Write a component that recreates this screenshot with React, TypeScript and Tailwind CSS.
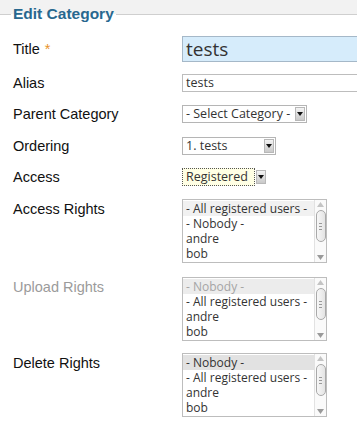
import React from "react";

const uiFont = { fontFamily: '"Open Sans", "DejaVu Sans", sans-serif' };

function Arrow() {
  return (
    <span className="flex h-[14px] w-[10px] items-center justify-center border border-[#b8b8b8] bg-gradient-to-b from-[#f4f4f4] to-[#c9c9c9]">
      <svg width="6" height="4" viewBox="0 0 6 4">
        <path d="M0 0h6L3 4z" fill="#111" />
      </svg>
    </span>
  );
}

function Select({ label, width, focus }: { label: string; width: string; focus?: boolean }) {
  return (
    <div className={`flex h-[18px] items-center ${width} ${focus ? "" : "border border-[#b5b5b5] bg-white"}`}>
      <span
        className={`flex h-full flex-1 items-center pl-[3px] text-[12.5px] text-[#333] ${
          focus ? "border border-dotted border-[#555] bg-[#ffffe4]" : ""
        }`}
        style={uiFont}
      >
        {label}
      </span>
      <span className="flex h-full items-center pl-[1px] pr-[1px]">
        <Arrow />
      </span>
    </div>
  );
}

function Scrollbar() {
  return (
    <div className="flex w-[12px] flex-col items-center border-l border-[#e2e2e2] bg-[#fafafa] py-[2px]">
      <svg width="7" height="5" viewBox="0 0 7 5">
        <path d="M0 5L3.5 0 7 5z" fill="#c4c4c4" />
      </svg>
      <div className="mt-[3px] flex h-[32px] w-[10px] items-center justify-center rounded-full border border-[#a9a9a9] bg-gradient-to-r from-[#f7f7f7] to-[#e4e4e4]">
        <div className="flex flex-col gap-[2px]">
          <span className="block h-px w-[3px] bg-[#999]" />
          <span className="block h-px w-[3px] bg-[#999]" />
          <span className="block h-px w-[3px] bg-[#999]" />
        </div>
      </div>
      <div className="flex-1" />
      <svg width="7" height="5" viewBox="0 0 7 5">
        <path d="M0 0h7L3.5 5z" fill="#9a9a9a" />
      </svg>
    </div>
  );
}

function ListBox({ items, first }: { items: string[]; first: "light" | "muted" | "selected" }) {
  const firstCls =
    first === "muted"
      ? "bg-[#ececec] text-[#a5a5a5]"
      : first === "selected"
      ? "bg-[#e2e2e2] text-[#333]"
      : "bg-[#f1f1f1] text-[#333]";
  return (
    <div className="flex h-[64px] w-[145px] border border-[#bdbdbd] bg-white">
      <div className="flex flex-1 flex-col pt-[1px] text-[12px] leading-[15px]" style={uiFont}>
        {items.map((t, i) => (
          <div key={t} className={`h-[15px] pl-[3px] ${i === 0 ? firstCls : "text-[#333]"}`}>
            {t}
          </div>
        ))}
      </div>
      <Scrollbar />
    </div>
  );
}

function Row({
  label,
  children,
  mt,
  top,
  muted,
  required,
}: {
  label: string;
  children: React.ReactNode;
  mt: string;
  top?: boolean;
  muted?: boolean;
  required?: boolean;
}) {
  return (
    <div className={`flex ${top ? "items-start" : "items-center"} ${mt}`}>
      <div
        className={`w-[169px] shrink-0 text-[14.5px] leading-[18px] ${muted ? "text-[#9b9b9b]" : "text-[#111]"} ${
          top ? "pt-[1px]" : ""
        }`}
      >
        {label}
        {required && <span className="ml-[5px] text-[#e8922a]">*</span>}
      </div>
      <div className="flex-1">{children}</div>
    </div>
  );
}

export default function App() {
  return (
    <div
      className="h-[431px] w-[357px] overflow-hidden bg-[#f2f2f2] pt-[5px]"
      style={{ fontFamily: '"Liberation Sans", Arial, sans-serif' }}
    >
      <fieldset className="h-[426px] border-t border-[#cfcfcf] bg-white pl-[13px]">
        <legend className="ml-[-2px] px-[2px] text-[15.5px] font-bold leading-[18px] text-[#28688f]">
          Edit Category
        </legend>

        <Row label="Title" mt="mt-[13px]" required>
          <div
            className="flex h-[26px] w-[190px] items-center border border-[#a5b8c8] bg-[#d6ecfb] pl-[3px] text-[19px] text-[#333]"
            style={uiFont}
          >
            tests
          </div>
        </Row>

        <Row label="Alias" mt="mt-[12px]">
          <div
            className="flex h-[18px] w-[190px] items-center border border-[#bdbdbd] bg-white pl-[3px] text-[12.5px] text-[#333]"
            style={uiFont}
          >
            tests
          </div>
        </Row>

        <Row label="Parent Category" mt="mt-[13px]">
          <Select label="- Select Category -" width="w-[125px]" />
        </Row>

        <Row label="Ordering" mt="mt-[14px]">
          <Select label="1. tests" width="w-[94px]" />
        </Row>

        <Row label="Access" mt="mt-[13px]">
          <Select label="Registered" width="w-[85px]" focus />
        </Row>

        <Row label="Access Rights" mt="mt-[13px]" top>
          <ListBox items={["- All registered users -", "- Nobody -", "andre", "bob"]} first="light" />
        </Row>

        <Row label="Upload Rights" mt="mt-[14px]" top muted>
          <ListBox items={["- Nobody -", "- All registered users -", "andre", "bob"]} first="muted" />
        </Row>

        <Row label="Delete Rights" mt="mt-[12px]" top>
          <ListBox items={["- Nobody -", "- All registered users -", "andre", "bob"]} first="selected" />
        </Row>
      </fieldset>
    </div>
  );
}
